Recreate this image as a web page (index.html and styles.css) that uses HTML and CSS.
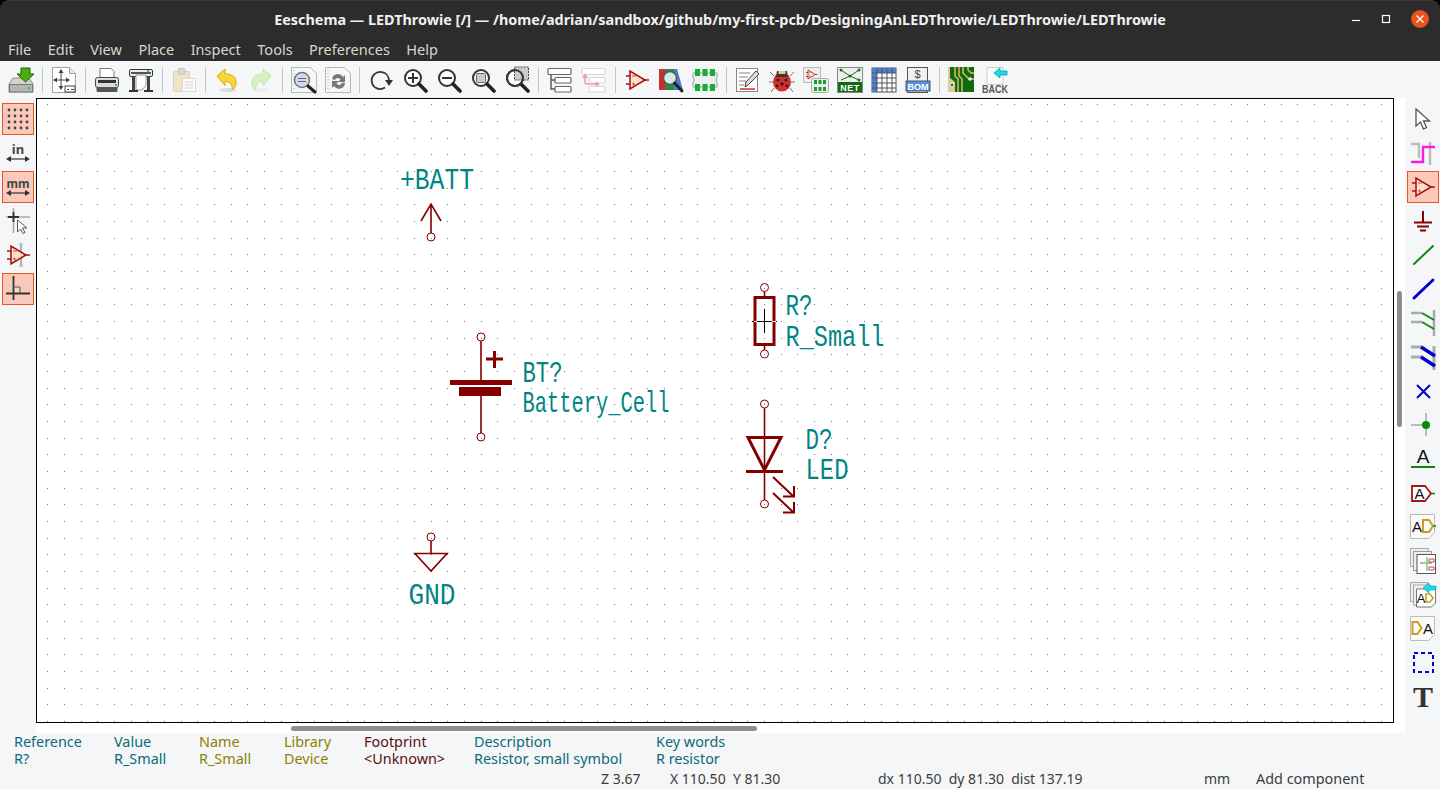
FILE: index.html
```html
<!DOCTYPE html>
<html lang="en">
<head>
  <meta charset="UTF-8">
  <title>Eeschema — LEDThrowie</title>
  <link rel="stylesheet" href="styles.css">
</head>
<body>
  <svg class="defs" width="0" height="0">
    <defs>
      <symbol id="opamp" viewBox="0 0 26 26">
        <path d="M2 9h4M2 17h4M20 13h5" stroke="#b01010" stroke-width="1.6"/>
        <path d="M6 4v18l15-9z" fill="#f5e2c8" stroke="#a80c0c" stroke-width="1.5"/>
        <path d="M8 9h4M8 17h3M9.500 15.500v3" stroke="#c85050" stroke-width="1"/>
      </symbol>
      <symbol id="mag" viewBox="0 0 26 26">
        <circle cx="11" cy="11" r="8" fill="#fff" stroke="#333" stroke-width="2"/>
        <path d="M17 17l7 7" stroke="#222" stroke-width="3.6" stroke-linecap="round"/>
      </symbol>
      <symbol id="arrow-h" viewBox="0 0 26 8">
        <path d="M3 4h20" stroke="#333" stroke-width="1.2"/>
        <path d="M1 4l5-3v6zM25 4l-5-3v6z" fill="#333"/>
      </symbol>
    </defs>
  </svg>

  <header class="titlebar">
    <span></span>
    <div class="title">Eeschema — LEDThrowie [/] — /home/adrian/sandbox/github/my-first-pcb/DesigningAnLEDThrowie/LEDThrowie/LEDThrowie</div>
    <div class="win-buttons">
      <svg width="10" height="10" viewBox="0 0 10 10"><path d="M1 6.500h8" stroke="#fff" stroke-width="1.2"/></svg>
      <svg width="10" height="10" viewBox="0 0 10 10"><rect x="1.500" y="1.500" width="7" height="7" fill="none" stroke="#fff" stroke-width="1.2"/></svg>
      <svg width="18" height="18" viewBox="0 0 18 18"><circle cx="9" cy="9" r="9" fill="#e95420"/><path d="M5.500 5.500l7 7M12.500 5.500l-7 7" stroke="#fff" stroke-width="1.3"/></svg>
    </div>
  </header>

  <nav class="menubar">
    <span>File</span><span>Edit</span><span>View</span><span>Place</span><span>Inspect</span><span>Tools</span><span>Preferences</span><span>Help</span>
  </nav>

  <div class="toolbar">
    <div class="tool"><svg class="ico" viewBox="0 0 26 26">
      <path d="M5 11h16l4 6v8H1v-8z" fill="#d2d2d2" stroke="#8c8c8c"/><rect x="1.500" y="17.500" width="23" height="7.500" fill="#b4b4b4" stroke="#7a7a7a"/><rect x="20" y="20" width="2" height="2" fill="#35c23a"/>
      <path d="M13 1h9v6h4l-8.500 8L9 7h4z" fill="#4fae0c" stroke="#1f6208"/></svg></div>
    <i class="sep"></i>
    <div class="tool"><svg class="ico" viewBox="0 0 26 26">
      <path d="M1.500 .5h17l6 6v19h-23z" fill="#fff" stroke="#a0a0a0"/><path d="M18.500 .5v6h6" fill="#e8e8e8" stroke="#a0a0a0"/>
      <path d="M10 3v19M3 13h15" stroke="#444"/><path d="M10 2l-2.500 4h5zM10 23l-2.500-4h5zM2 13l4-2.500v5zM19 13l-4-2.500v5z" fill="#444"/>
      <rect x="14" y="19" width="10" height="6" fill="#fff" stroke="#444"/><path d="M16 22.500h2M20 22.500h3" stroke="#444"/></svg></div>
    <i class="sep"></i>
    <div class="tool"><svg class="ico" viewBox="0 0 26 26">
      <path d="M6 1.500h11l3 3V11H6z" fill="#fff" stroke="#777"/><rect x="1.500" y="10.500" width="23" height="10" rx="2" fill="#dcdcdc" stroke="#444"/>
      <rect x="4" y="13" width="18" height="3" fill="#333"/><rect x="2.500" y="20" width="21" height="5" rx="1.500" fill="#555"/><rect x="21" y="17" width="2" height="2" fill="#35c23a"/></svg></div>
    <div class="tool"><svg class="ico" viewBox="0 0 26 26">
      <rect x="1.500" y="2.500" width="23" height="7" rx="1.500" fill="#eee" stroke="#333"/><path d="M3 6h20" stroke="#222" stroke-width="1.500"/><rect x="19" y="3" width="2" height="2" fill="#35c23a"/>
      <path d="M8 8h10v10l-4 5H8z" fill="#fff" stroke="#999"/><path d="M4 9h3v14H4zM19 9h3v14h-3z" fill="#444"/><path d="M1 24h9M16 24h9" stroke="#333" stroke-width="2"/></svg></div>
    <i class="sep"></i>
    <div class="tool"><svg class="ico" viewBox="0 0 26 26">
      <rect x="2.500" y="4.500" width="16" height="20" rx="1" fill="#f3e2ca" stroke="#e0d0b8"/><rect x="7" y="1.500" width="7" height="6" rx="1" fill="#d8d8d0" stroke="#c8c8c0"/>
      <rect x="11.500" y="11.500" width="13" height="13" fill="#fbfbfb" stroke="#d8d8d8"/><path d="M14 15h8M14 18h8M14 21h8" stroke="#d4d4d4"/></svg></div>
    <i class="sep"></i>
    <div class="tool"><svg class="ico" viewBox="0 0 26 26">
      <ellipse cx="14" cy="23" rx="9" ry="2" fill="#ddd"/>
      <path d="M3 9l8-7v5c7 0 12 3 11 10-.5 3-2 4.500-4 5.500 1-5-2-8-7-8v4z" fill="#f7d635" stroke="#d6a90f"/></svg></div>
    <div class="tool"><svg class="ico" viewBox="0 0 26 26">
      <ellipse cx="12" cy="23" rx="9" ry="2" fill="#eee"/>
      <path d="M23 9l-8-7v5C8 7 3 10 4 17c.5 3 2 4.500 4 5.500-1-5 2-8 7-8v4z" fill="#d4f1c4" stroke="#bfe6ac"/></svg></div>
    <i class="sep"></i>
    <div class="tool"><svg class="ico" viewBox="0 0 26 26">
      <path d="M.5 .5h19l6 6v19H.5z" fill="#f6f6f6" stroke="#b8b8b8"/><path d="M3 3v21" stroke="#aaa" stroke-dasharray="1 2"/>
      <circle cx="11" cy="13" r="7.500" fill="#cfdcec" stroke="#777" stroke-width="1.500"/><path d="M7 11.500h8M7 14.500h8" stroke="#668"/><path d="M17 19l7 6" stroke="#222" stroke-width="3" stroke-linecap="round"/></svg></div>
    <div class="tool"><svg class="ico" viewBox="0 0 26 26">
      <path d="M.5 .5h19l6 6v19H.5z" fill="#f6f6f6" stroke="#b8b8b8"/><path d="M3 3v21" stroke="#aaa" stroke-dasharray="1 2"/>
      <path d="M7 12a6 6 0 0 1 11-2l2-2v7h-7l2.500-2.500A3 3 0 0 0 10 13z" fill="#777"/><path d="M20 16a6 6 0 0 1-11 3l-2 2v-7h7l-2.500 2.500a3 3 0 0 0 5.500-1z" fill="#777"/></svg></div>
    <i class="sep"></i>
    <div class="tool"><svg class="ico" viewBox="0 0 26 26">
      <path d="M17 20.500A8.500 8.500 0 1 1 14 5.200a8.500 8.500 0 0 1 7 8" fill="none" stroke="#333" stroke-width="1.800"/><path d="M17 13h8l-4 6z" fill="#333"/></svg></div>
    <div class="tool"><svg class="ico" viewBox="0 0 26 26"><use href="#mag"/><path d="M6 11h10M11 6v10" stroke="#333" stroke-width="2"/></svg></div>
    <div class="tool"><svg class="ico" viewBox="0 0 26 26"><use href="#mag"/><path d="M6 11h10" stroke="#333" stroke-width="2"/></svg></div>
    <div class="tool"><svg class="ico" viewBox="0 0 26 26"><use href="#mag"/><rect x="6.500" y="6.500" width="9" height="9" rx="1" fill="#ccc" stroke="#666"/></svg></div>
    <div class="tool"><svg class="ico" viewBox="0 0 26 26">
      <use href="#mag"/><rect x="10.500" y="0" width="14" height="13" fill="#ccc" stroke="#444" stroke-dasharray="2 1"/><path d="M11 3a8 8 0 0 1 0 16 8 8 0 0 1 0-16" fill="none" stroke="#333" stroke-width="2"/></svg></div>
    <i class="sep"></i>
    <div class="tool"><svg class="ico" viewBox="0 0 26 26">
      <g fill="#fff" stroke="#666" stroke-width="1.200"><rect x="1" y="1.500" width="23" height="6" rx="1"/><rect x="8" y="10.500" width="16" height="5.500" rx="1"/><rect x="8" y="19.500" width="16" height="5.500" rx="1"/></g>
      <path d="M4 8v14h4M4 13h4" fill="none" stroke="#555" stroke-width="1.400"/></svg></div>
    <div class="tool"><svg class="ico" viewBox="0 0 26 26">
      <g fill="#fff" stroke="#d8d8d8" stroke-width="1.200"><rect x="1" y="1.500" width="23" height="6" rx="1"/><rect x="8" y="10.500" width="16" height="5.500" rx="1"/><rect x="8" y="19.500" width="16" height="5.500" rx="1"/></g>
      <path d="M4 11v4a2 2 0 0 0 2 2h9" fill="none" stroke="#eda3a3" stroke-width="1.600"/><path d="M4 6l-3 5h6z" fill="#eda3a3"/><circle cx="16" cy="17" r="2" fill="#eda3a3"/></svg></div>
    <i class="sep"></i>
    <div class="tool"><svg class="ico" viewBox="0 0 26 26"><use href="#opamp"/></svg></div>
    <div class="tool"><svg class="ico" viewBox="0 0 26 26">
      <rect x="1" y="2" width="6" height="21" fill="#c83030"/><rect x="7" y="2" width="9" height="21" fill="#2a8a48"/><path d="M16 2h3l6 21h-9z" fill="#4a7cc8"/>
      <circle cx="12" cy="11" r="6.500" fill="#d8e8e4" stroke="#555" stroke-width="1.400"/><path d="M16.500 16l7.500 8" stroke="#222" stroke-width="3" stroke-linecap="round"/></svg></div>
    <div class="tool"><svg class="ico" viewBox="0 0 26 26">
      <path d="M1 6h24v5l-1.500 2 1.500 2v5H1v-5l1.500-2L1 11z" fill="#eee" stroke="#999"/>
      <g fill="#12b030"><rect x="3" y="2" width="5" height="7"/><rect x="10.500" y="2" width="5" height="7"/><rect x="18" y="2" width="5" height="7"/><rect x="3" y="17" width="5" height="7"/><rect x="10.500" y="17" width="5" height="7"/><rect x="18" y="17" width="5" height="7"/></g></svg></div>
    <i class="sep"></i>
    <div class="tool"><svg class="ico" viewBox="0 0 26 26">
      <rect x="1.500" y="1.500" width="21" height="23" fill="#fff" stroke="#888"/><path d="M4 6h11M4 10h9M4 14h7M4 18h5" stroke="#888"/><path d="M5 22h15" stroke="#d02020" stroke-width="1.400"/>
      <path d="M10 20l1-5L21 4l3 3-11 11z" fill="#ddd" stroke="#444"/></svg></div>
    <div class="tool"><svg class="ico" viewBox="0 0 26 26">
      <path d="M5 9L1 5M21 9l4-4M4 15H0M22 15h4M5 21l-3 4M21 21l3 4" stroke="#777"/><ellipse cx="13" cy="15" rx="9" ry="9.500" fill="#d92d2d"/><path d="M8 4h10l1 6H7z" fill="#3a3a30"/><rect x="9.500" y="4" width="7" height="3" fill="#d8d090"/>
      <g fill="#222"><circle cx="9" cy="13" r="1.600"/><circle cx="17" cy="13" r="1.600"/><circle cx="13" cy="17" r="1.800"/><circle cx="8" cy="19" r="1.400"/><circle cx="18" cy="19" r="1.400"/></g></svg></div>
    <div class="tool"><svg class="ico" viewBox="0 0 26 26">
      <rect x=".5" y=".5" width="17" height="15" fill="#eee" stroke="#bbb"/><svg x="2" y="1" width="13" height="13" viewBox="0 0 26 26"><use href="#opamp"/></svg>
      <rect x="8.500" y="11.500" width="17" height="14" rx="2" fill="#eee" stroke="#aaa"/><g fill="#12a030"><rect x="11" y="13" width="3" height="4"/><rect x="15.500" y="13" width="3" height="4"/><rect x="20" y="13" width="3" height="4"/><rect x="11" y="20" width="3" height="4"/><rect x="15.500" y="20" width="3" height="4"/><rect x="20" y="20" width="3" height="4"/></g></svg></div>
    <div class="tool"><svg class="ico" viewBox="0 0 26 26">
      <rect x=".5" y=".5" width="25" height="25" fill="#eee" stroke="#888"/><path d="M4 3l9 6 9-6M4 13l9-4 9 4" fill="none" stroke="#157015"/><g fill="#157015"><circle cx="4" cy="3" r="1.500"/><circle cx="22" cy="3" r="1.500"/><circle cx="13" cy="9" r="1.500"/><circle cx="22" cy="13" r="1.500"/></g>
      <rect x="1" y="15" width="24" height="10" fill="#0f6a12"/><text class="ico-net" x="13" y="24" text-anchor="middle">NET</text></svg></div>
    <div class="tool"><svg class="ico" viewBox="0 0 26 26">
      <rect x="1" y="1" width="24" height="24" fill="#fff" stroke="#555"/><rect x="1" y="1" width="24" height="5" fill="#4a80d8"/><rect x="1" y="1" width="5" height="24" fill="#4a80d8"/>
      <path d="M1 6h24M1 11h24M1 16h24M1 21h24M6 1v24M11 1v24M16 1v24M21 1v24" stroke="#555"/></svg></div>
    <div class="tool"><svg class="ico" viewBox="0 0 26 26">
      <rect x="2.500" y=".5" width="20" height="25" fill="#f0f0f0" stroke="#555"/><text class="ico-dollar" x="12.500" y="11" text-anchor="middle">$</text>
      <rect x="1" y="14" width="24" height="10" fill="#4f92e8" stroke="#555"/><text class="ico-bom" x="13" y="23" text-anchor="middle">BOM</text></svg></div>
    <i class="sep"></i>
    <div class="tool"><svg class="ico" viewBox="0 0 26 26">
      <rect x="0" y="0" width="26" height="25" fill="#dfc89a"/><path d="M2 0h24v25H7V15l-5-4z" fill="#0f6a10"/>
      <path d="M7 0v9l3 3v13M11 0v9l3 3v13M15 0v6l6 6h5M20 0v3l3 3h3" fill="none" stroke="#dcb860" stroke-width="1.500"/><circle cx="22" cy="12" r="1.800" fill="#eee"/><circle cx="4" cy="18" r="1.800" fill="#0f6a10" stroke="#eee"/></svg></div>
    <div class="tool"><svg class="ico" viewBox="0 0 26 26">
      <path d="M5 .5h16v17H5z" fill="#fafafa" stroke="#ccc"/><path d="M25 8h-7v3l-6-5 6-5v3h7z" fill="#19d8e8" stroke="#0aa0b0" stroke-width=".8"/>
      <text class="ico-back" x="13" y="25.500" text-anchor="middle" textLength="26" lengthAdjust="spacingAndGlyphs">BACK</text></svg></div>
  </div>

  <div class="main">
    <aside class="sidebar">
      <div class="tool tool-on"><svg class="ico" viewBox="0 0 26 26"><g fill="#444"><circle cx="4" cy="4" r="1.400"/><circle cx="10" cy="4" r="1.400"/><circle cx="16" cy="4" r="1.400"/><circle cx="22" cy="4" r="1.400"/><circle cx="4" cy="10" r="1.400"/><circle cx="10" cy="10" r="1.400"/><circle cx="16" cy="10" r="1.400"/><circle cx="22" cy="10" r="1.400"/><circle cx="4" cy="16" r="1.400"/><circle cx="10" cy="16" r="1.400"/><circle cx="16" cy="16" r="1.400"/><circle cx="22" cy="16" r="1.400"/><circle cx="4" cy="22" r="1.400"/><circle cx="10" cy="22" r="1.400"/><circle cx="16" cy="22" r="1.400"/><circle cx="22" cy="22" r="1.400"/></g></svg></div>
      <div class="tool"><svg class="ico" viewBox="0 0 26 26"><text class="ico-unit" x="13" y="14" text-anchor="middle">in</text><use href="#arrow-h" x="0" y="15" width="26" height="8"/></svg></div>
      <div class="tool tool-on"><svg class="ico" viewBox="0 0 26 26"><text class="ico-unit" x="13" y="14" text-anchor="middle" textLength="23" lengthAdjust="spacingAndGlyphs">mm</text><use href="#arrow-h" x="0" y="15" width="26" height="8"/></svg></div>
      <div class="tool"><svg class="ico" viewBox="0 0 26 26">
        <path d="M8.500 0v25M1 9h24" stroke="#aaa" stroke-width="1.600"/><path d="M8.500 4v10M3 9h11" stroke="#333" stroke-width="1.800"/>
        <path d="M12.500 12v12l3-3 2.500 4.500 2-1-2.500-4.500h4.500z" fill="#fff" stroke="#555"/></svg></div>
      <div class="tool"><svg class="ico" viewBox="0 0 26 26">
        <path d="M16 2v22" stroke="#aaa" stroke-width="1.800"/><circle cx="16" cy="2.500" r="1.800" fill="#bbb"/><circle cx="16" cy="23.500" r="1.800" fill="#bbb"/><use href="#opamp" width="26" height="26"/></svg></div>
      <div class="tool tool-on"><svg class="ico" viewBox="0 0 26 26">
        <rect x="8" y="11" width="7" height="6" fill="#f3d9b8"/><path d="M8.500 0v24M1 17.500h24" stroke="#333" stroke-width="1.800"/><path d="M8 11h7v6" fill="none" stroke="#555"/></svg></div>
    </aside>

    <div class="sheet">
      <svg class="canvas" viewBox="36 98 1369 635" width="1369" height="635">
        <defs>
          <pattern id="grid" x="47" y="104" width="50" height="50" patternUnits="userSpaceOnUse">
            <rect width="1" height="1" fill="#777"/><rect x="17" width="1" height="1" fill="#777"/><rect x="34" width="1" height="1" fill="#777"/>
            <rect y="17" width="1" height="1" fill="#777"/><rect x="17" y="17" width="1" height="1" fill="#777"/><rect x="34" y="17" width="1" height="1" fill="#777"/>
            <rect y="34" width="1" height="1" fill="#777"/><rect x="17" y="34" width="1" height="1" fill="#777"/><rect x="34" y="34" width="1" height="1" fill="#777"/>
          </pattern>
        </defs>
        <rect x="37" y="99" width="1357" height="626" fill="url(#grid)"/>
        <rect x="36.500" y="98.500" width="1357" height="624" fill="none" stroke="#000"/>

        <!-- +BATT -->
        <g class="wire">
          <path class="w15" d="M431 233V204M421 221l10-17 10 17" fill="none"/>
          <circle class="pin" cx="431" cy="237" r="4"/>
        </g>
        <text class="ref" x="400" y="189" textLength="74" lengthAdjust="spacingAndGlyphs">+BATT</text>

        <!-- battery -->
        <g class="wire">
          <circle class="pin" cx="481" cy="337" r="4"/><circle class="pin" cx="481" cy="437" r="4"/>
          <path class="w15" d="M481 341V381M481 396V433"/>
          <path class="w3" d="M486 359h17M494.500 351v17"/>
          <rect class="solid" x="450" y="380" width="62" height="5"/><rect class="solid" x="459" y="387" width="42" height="9"/>
        </g>
        <text class="ref" x="522.500" y="382" textLength="40" lengthAdjust="spacingAndGlyphs">BT?</text>
        <text class="ref" x="522.500" y="412" textLength="147" lengthAdjust="spacingAndGlyphs">Battery_Cell</text>

        <!-- resistor -->
        <g class="wire">
          <circle class="pin" cx="764.500" cy="287.500" r="4"/><circle class="pin" cx="764.500" cy="354" r="4"/>
          <path class="w15" d="M764.500 291.500V297M764.500 345V350"/>
          <rect class="w3" x="755" y="297.500" width="19" height="47" fill="none"/>
        </g>
        <path class="xhair" d="M764.500 309v24M752 321.500h25"/>
        <path class="xhair-w" d="M754 321.500h3M772 321.500h4"/>
        <text class="ref" x="785.500" y="315" textLength="27" lengthAdjust="spacingAndGlyphs">R?</text>
        <text class="ref" x="785.500" y="346" textLength="99" lengthAdjust="spacingAndGlyphs">R_Small</text>

        <!-- LED -->
        <g class="wire">
          <circle class="pin" cx="764.500" cy="404" r="4"/><circle class="pin" cx="764.500" cy="504" r="4"/>
          <path class="w15" d="M764.500 408V500"/>
          <path class="w3" d="M748 437.500h33L764.500 470zM746 471.500h37" fill="none"/>
          <path class="w2" d="M773 477l20 19M783 496.500h11V486M773 493l20 19M783 512.500h11V502" fill="none"/>
        </g>
        <text class="ref" x="805.500" y="449" textLength="27" lengthAdjust="spacingAndGlyphs">D?</text>
        <text class="ref" x="805.500" y="479" textLength="43" lengthAdjust="spacingAndGlyphs">LED</text>

        <!-- GND -->
        <g class="wire">
          <circle class="pin" cx="431" cy="537" r="4"/>
          <path class="w15" d="M431 541v12M415 553.500h32L431 571z" fill="none"/>
        </g>
        <text class="ref" x="408.500" y="604" textLength="47" lengthAdjust="spacingAndGlyphs">GND</text>
      </svg>
      <div class="vthumb"></div>
      <div class="hthumb"></div>
    </div>

    <aside class="sidebar sidebar-right">
      <div class="tool"><svg class="ico" viewBox="0 0 26 26"><path d="M6 3v17l4.500-4 3 7 3-1.500-3-6.500h6z" fill="#fff" stroke="#555" stroke-width="1.300"/></svg></div>
      <div class="tool"><svg class="ico" viewBox="0 0 26 26"><path d="M1 4h8v14M20 2v23" fill="none" stroke="#bbb" stroke-width="2.400"/><path d="M1 22h12V7h12" fill="none" stroke="#f020e0" stroke-width="2.400"/></svg></div>
      <div class="tool tool-on"><svg class="ico" viewBox="0 0 26 26"><use href="#opamp"/></svg></div>
      <div class="tool"><svg class="ico" viewBox="0 0 26 26"><path d="M13 3v11M4 14.500h18M7 18.500h12M10 22.500h6" stroke="#840000" stroke-width="2"/></svg></div>
      <div class="tool"><svg class="ico" viewBox="0 0 26 26"><path d="M4 22L23 4" stroke="#0a8a0a" stroke-width="2" stroke-linecap="round"/></svg></div>
      <div class="tool"><svg class="ico" viewBox="0 0 26 26"><path d="M4 22L23 4" stroke="#0000c8" stroke-width="3" stroke-linecap="round"/></svg></div>
      <div class="tool"><svg class="ico" viewBox="0 0 26 26"><path d="M1 3h11M1 12h11M24 0v26" stroke="#aaa" stroke-width="2.500"/><path d="M12 3l12 7M12 12l12 7" stroke="#0a8a0a" stroke-width="2"/></svg></div>
      <div class="tool"><svg class="ico" viewBox="0 0 26 26"><path d="M1 3h11M1 13h11M24 2v24" stroke="#aaa" stroke-width="3"/><path d="M11 3l14 9M11 13l14 9" stroke="#0000c8" stroke-width="3.400"/></svg></div>
      <div class="tool"><svg class="ico" viewBox="0 0 26 26"><path d="M7 7l13 13M20 7L7 20" stroke="#0000c8" stroke-width="2"/></svg></div>
      <div class="tool"><svg class="ico" viewBox="0 0 26 26"><path d="M1 13h15M16 1v23" stroke="#bbb" stroke-width="2"/><circle cx="16" cy="13" r="4" fill="#0a8a0a"/></svg></div>
      <div class="tool"><svg class="ico" viewBox="0 0 26 26"><text class="ico-a" x="13" y="17" text-anchor="middle">A</text><path d="M1 21h24" stroke="#0a8a0a" stroke-width="2"/></svg></div>
      <div class="tool"><svg class="ico" viewBox="0 0 26 26"><path d="M2 6h13l6 7.500-6 7.500H2z" fill="#fff" stroke="#a01818" stroke-width="1.800"/><path d="M21 13.500h4" stroke="#0a8a0a" stroke-width="1.600"/><text class="ico-a-md" x="9.500" y="19" text-anchor="middle">A</text></svg></div>
      <div class="tool"><svg class="ico" viewBox="0 0 26 26"><path d="M.5 .5h24v18l-6 6H.5z" fill="#fafafa" stroke="#bbb"/><text class="ico-a-md" x="7" y="18" text-anchor="middle">A</text><path d="M13 6h6l4 6-4 6h-6z" fill="none" stroke="#c8a020" stroke-width="2"/><path d="M23 12h3" stroke="#0a8a0a" stroke-width="1.500"/></svg></div>
      <div class="tool"><svg class="ico" viewBox="0 0 26 26"><rect x=".5" y=".5" width="18" height="18" fill="#eee" stroke="#aaa"/><rect x="3.500" y="3.500" width="18" height="19" fill="#eee" stroke="#999"/><rect x="7" y="6.500" width="18.500" height="19" fill="#fff" stroke="#555"/><path d="M10 15h6M17 9v14M17 15h5" stroke="#78b878" stroke-width="1.300"/><path d="M19 11h5v3h-5zM19 19h5v3h-5z" fill="none" stroke="#c84848"/></svg></div>
      <div class="tool"><svg class="ico" viewBox="0 0 26 26"><rect x=".5" y=".5" width="17" height="19" fill="#eee" stroke="#aaa"/><rect x="3.500" y="3" width="17" height="20" fill="#eee" stroke="#aaa"/><path d="M6.500 7h19v14l-4 4h-15z" fill="#fff" stroke="#777"/><text class="ico-a-sm" x="11" y="21" text-anchor="middle">A</text><path d="M16 12h4l3 4-3 4h-4z" fill="none" stroke="#c8a020" stroke-width="1.600"/><path d="M26 8h-7v3l-6-5 6-5v3h7z" fill="#19d8e8" stroke="#0aa0b0" stroke-width=".6"/></svg></div>
      <div class="tool"><svg class="ico" viewBox="0 0 26 26"><path d="M.5 .5h24v18l-6 6H.5z" fill="#fafafa" stroke="#bbb"/><path d="M2.500 6h5l4 6-4 6h-5z" fill="none" stroke="#c8a020" stroke-width="2"/><text class="ico-a-md" x="18" y="18" text-anchor="middle">A</text></svg></div>
      <div class="tool"><svg class="ico" viewBox="0 0 26 26"><rect x="4" y="3" width="19" height="19" fill="none" stroke="#0000e0" stroke-width="2" stroke-dasharray="4 3"/></svg></div>
      <div class="tool"><svg class="ico" viewBox="0 0 26 26"><text class="ico-t" x="13" y="23" text-anchor="middle">T</text></svg></div>
    </aside>
  </div>

  <section class="msgpanel">
    <div class="msg-col col-ref"><span>Reference</span><span>R?</span></div>
    <div class="msg-col col-val"><span>Value</span><span>R_Small</span></div>
    <div class="msg-col col-name olive"><span>Name</span><span>R_Small</span></div>
    <div class="msg-col col-lib olive"><span>Library</span><span>Device</span></div>
    <div class="msg-col col-fp maroon"><span>Footprint</span><span>&lt;Unknown&gt;</span></div>
    <div class="msg-col col-desc"><span>Description</span><span>Resistor, small symbol</span></div>
    <div class="msg-col"><span>Key words</span><span>R resistor</span></div>
  </section>
  <footer class="statusbar">
    <span class="st-zoom">Z 3.67</span>
    <span class="st-xy">X 110.50 &nbsp;Y 81.30</span>
    <span class="st-delta">dx 110.50 &nbsp;dy 81.30 &nbsp;dist 137.19</span>
    <span class="st-unit">mm</span>
    <span class="st-msg">Add component</span>
  </footer>
</body>
</html>
```

FILE: styles.css
```css
html, body {
  margin: 0;
  padding: 0;
  height: 100%;
  overflow: hidden;
}

body {
  display: flex;
  flex-direction: column;
  background: #000;
  font-family: "Noto Sans", sans-serif;
  font-size: 14px;
}

.defs {
  position: absolute;
}

/* window chrome */
.titlebar {
  display: grid;
  grid-template-columns: 1fr auto 1fr;
  align-items: center;
  height: 37px;
  flex: none;
  background: #2c2c2c;
  border-radius: 9px 9px 0 0;
  box-sizing: border-box;
  border-top: 1px solid #3c3c3c;
}

.title {
  color: #f0f0f0;
  font-weight: bold;
  font-size: 14.4px;
  white-space: nowrap;
}

.win-buttons {
  display: flex;
  justify-content: flex-end;
  align-items: center;
  gap: 20px;
  padding-right: 11px;
}

.menubar {
  display: flex;
  gap: 16.5px;
  height: 24px;
  flex: none;
  padding-left: 8px;
  align-items: center;
  background: #2c2c2c;
  color: #d9d6cf;
  font-size: 14.5px;
}

/* toolbars */
.toolbar {
  display: flex;
  align-items: center;
  height: 37px;
  flex: none;
  padding-left: 4px;
  background: #f5f6f7;
}

.tool {
  display: flex;
  align-items: center;
  justify-content: center;
  width: 34px;
  height: 26px;
}

.ico {
  width: 26px;
  height: 26px;
  overflow: visible;
}

.sep {
  width: 1px;
  height: 26px;
  margin: 0 4px;
  background: #c4c4c4;
}

.main {
  display: flex;
  height: 635px;
  flex: none;
  background: #f5f6f7;
}

.sidebar {
  display: flex;
  flex-direction: column;
  align-items: center;
  gap: 2px;
  width: 36px;
  padding-top: 5px;
  box-sizing: border-box;
  flex: none;
}

.sidebar-right {
  width: 35px;
}

.sidebar .tool {
  width: 32px;
  height: 32px;
  box-sizing: border-box;
}

.tool-on {
  background: #fbc9b9;
  border: 1px solid #e95420;
}

/* schematic sheet */
.sheet {
  position: relative;
  width: 1369px;
  flex: none;
  background: #fff;
}

.canvas {
  display: block;
}

.vthumb {
  position: absolute;
  left: 1361px;
  top: 193px;
  width: 5px;
  height: 136px;
  border-radius: 3px;
  background: #8f8f8f;
}

.hthumb {
  position: absolute;
  left: 255px;
  top: 628px;
  width: 466px;
  height: 5px;
  border-radius: 3px;
  background: #8f8f8f;
}

.ref {
  font-family: "Liberation Mono", monospace;
  font-size: 29px;
  fill: #008484;
}

.wire .pin {
  fill: none;
  stroke: #840000;
  stroke-width: 1;
}

.wire .w15 {
  stroke: #840000;
  stroke-width: 1.6;
}

.wire .w2 {
  stroke: #840000;
  stroke-width: 2;
}

.wire .w3 {
  stroke: #840000;
  stroke-width: 3;
}

.wire .solid {
  fill: #840000;
}

.xhair {
  stroke: #000;
  stroke-width: 1;
}

.xhair-w {
  stroke: #fff;
  stroke-width: 1;
}

/* text inside icons */
.ico-net {
  font: bold 9px "Liberation Sans", sans-serif;
  letter-spacing: .5px;
  fill: #fff;
}

.ico-bom {
  font: bold 9px "Liberation Sans", sans-serif;
  fill: #fff;
}

.ico-dollar {
  font: 11px "Liberation Sans", sans-serif;
  fill: #444;
}

.ico-back {
  font: bold 10.5px "Liberation Sans", sans-serif;
  fill: #555;
}

.ico-unit {
  font: bold 13px "Noto Sans", sans-serif;
  fill: #444;
}

.ico-a {
  font: 19px "Liberation Sans", sans-serif;
  fill: #111;
}

.ico-a-md {
  font: 15px "Liberation Sans", sans-serif;
  fill: #111;
}

.ico-a-sm {
  font: 13px "Liberation Sans", sans-serif;
  fill: #111;
}

.ico-t {
  font: bold 30px "Liberation Serif", serif;
  fill: #333;
}

/* message panel */
.msgpanel {
  display: flex;
  height: 36px;
  flex: none;
  padding-left: 14px;
  box-sizing: border-box;
  background: #f5f6f7;
  color: #0c6a78;
  font-size: 14.4px;
  line-height: 17px;
}

.msg-col {
  display: flex;
  flex-direction: column;
}

.col-ref { width: 100px; }
.col-val { width: 85px; }
.col-name { width: 85px; }
.col-lib { width: 80px; }
.col-fp { width: 110px; }
.col-desc { width: 182px; }

.olive {
  color: #8b8200;
}

.maroon {
  color: #5c0f0f;
}

.statusbar {
  display: flex;
  height: 20px;
  flex: none;
  padding: 0 0 2px 601px;
  box-sizing: border-box;
  align-items: center;
  background: #f5f6f7;
  color: #3c3c3c;
}

.st-zoom { width: 69px; }
.st-xy { width: 208px; }
.st-delta { width: 326px; }
.st-unit { width: 52px; }
.st-msg { font-size: 14.4px; }
```
